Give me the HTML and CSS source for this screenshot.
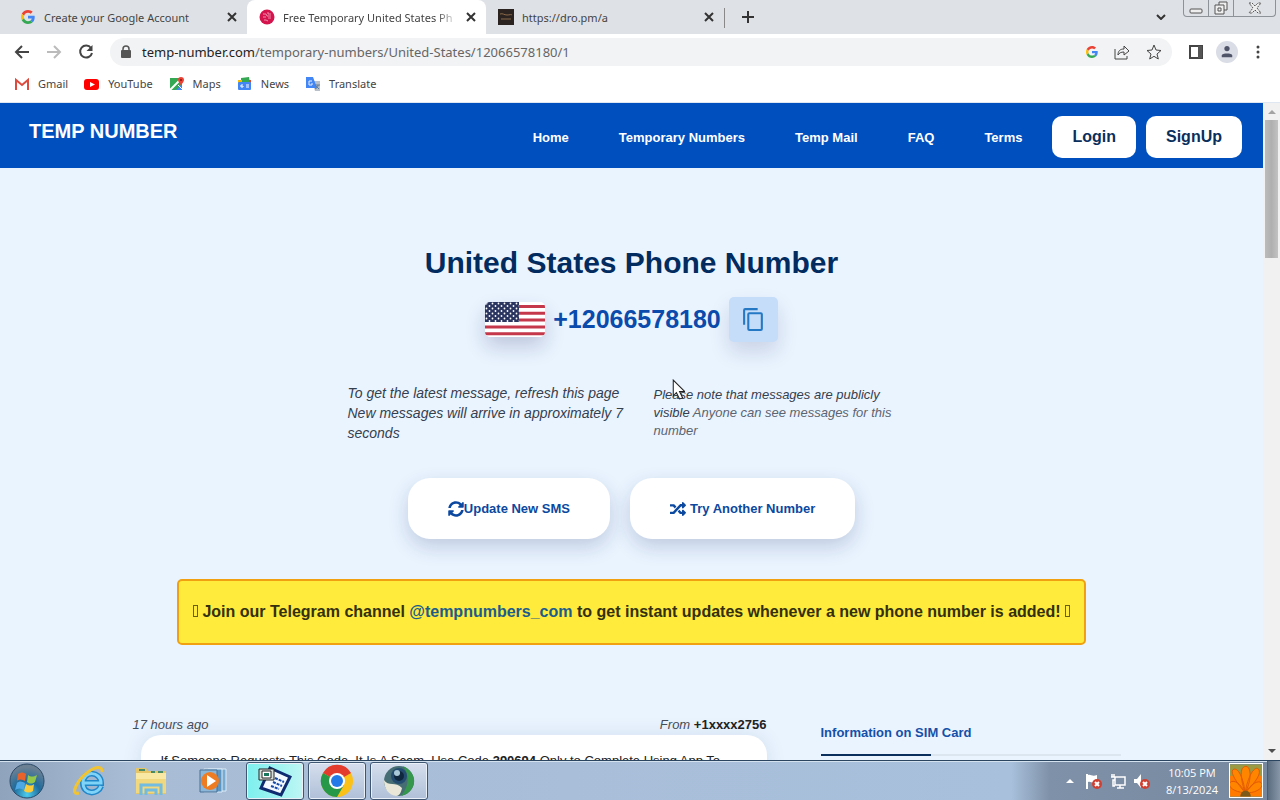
FILE: index.html
```html
<!DOCTYPE html>
<html lang="en">
<head>
  <meta charset="UTF-8" />
  <meta name="viewport" content="width=device-width, initial-scale=1.0"/>
  <title>Free Temporary United States Phone Number</title>
  <link rel="stylesheet" href="styles.css">
</head>
<body>
  <!-- Browser window -->
  <div class="tab-strip">
    <div class="tab">
      <svg class="tab-icon" viewBox="0 0 48 48"><path fill="#ea4335" d="M24 9.500c3.540 0 6.710 1.220 9.210 3.600l6.850-6.850C35.900 2.380 30.470 0 24 0 14.620 0 6.510 5.380 2.560 13.220l7.980 6.190C12.430 13.720 17.740 9.500 24 9.500z"/><path fill="#4285f4" d="M46.980 24.550c0-1.570-.15-3.090-.38-4.550H24v9.020h12.940c-.58 2.960-2.260 5.480-4.780 7.180l7.730 6c4.510-4.180 7.090-10.360 7.090-17.650z"/><path fill="#fbbc05" d="M10.530 28.590A14.500 14.500 0 0 1 9.770 24c0-1.600.27-3.140.76-4.590l-7.980-6.190A23.900 23.900 0 0 0 0 24c0 3.880.92 7.540 2.560 10.780z"/><path fill="#34a853" d="M24 48c6.480 0 11.930-2.130 15.890-5.810l-7.730-6c-2.150 1.450-4.920 2.300-8.160 2.300-6.260 0-11.570-4.220-13.470-9.910l-7.980 6.190C6.510 42.620 14.620 48 24 48z"/></svg>
      <span class="tab-title">Create your Google Account</span>
      <button class="tab-close" aria-label="Close tab"><svg viewBox="0 0 10 10"><path d="M1 1l8 8M9 1L1 9"/></svg></button>
    </div>
    <div class="tab active">
      <svg class="tab-icon" viewBox="0 0 16 16"><circle cx="8" cy="8" r="7.500" fill="#d4144c"/><path d="M4 5h3l1 2h4M4 8h3m2 1h3M5 11h2l2 1M9 3v2h3" fill="none" stroke="#f08fae"/></svg>
      <span class="tab-title">Free Temporary United States Ph</span>
      <button class="tab-close" aria-label="Close tab"><svg viewBox="0 0 10 10"><path d="M1 1l8 8M9 1L1 9"/></svg></button>
    </div>
    <div class="tab">
      <svg class="tab-icon" viewBox="0 0 16 16"><path fill="#2a2320" d="M0 0h16v16H0z"/><path d="M2 5c3-1 4 1 7 1s4-1 5 0M3 10h10" fill="none" stroke="#8a6a4a"/></svg>
      <span class="tab-title">https://dro.pm/a</span>
      <button class="tab-close" aria-label="Close tab"><svg viewBox="0 0 10 10"><path d="M1 1l8 8M9 1L1 9"/></svg></button>
    </div>
    <button class="new-tab" aria-label="New tab"><svg viewBox="0 0 12 12"><path d="M6 0v12M0 6h12"/></svg></button>
    <button class="tab-search" aria-label="Search tabs"><svg viewBox="0 0 10 6"><path d="M1 1l4 4 4-4"/></svg></button>
    <div class="window-buttons">
      <button aria-label="Minimize"><svg viewBox="0 0 14 14"><rect x="1" y="8" width="12" height="4" rx="1"/></svg></button>
      <button aria-label="Restore"><svg viewBox="0 0 14 14"><path d="M5 4V1h8v8h-3M1 4h9v9H1zM4 7h3v3H4z"/></svg></button>
      <button class="wide" aria-label="Close"><svg viewBox="0 0 14 14"><path d="M1 2h3l3 3 3-3h3L9 7l4 5h-3L7 9l-3 3H1l4-5z" stroke-dasharray="2 1"/></svg></button>
    </div>
  </div>

  <div class="toolbar">
    <button aria-label="Back"><svg viewBox="0 0 16 16"><path d="M15 8H2M8 2L2 8l6 6"/></svg></button>
    <button class="disabled" aria-label="Forward"><svg viewBox="0 0 16 16"><path d="M1 8h13M8 2l6 6-6 6"/></svg></button>
    <button aria-label="Reload"><svg viewBox="0 0 16 16"><path d="M13 4a6 6 0 1 0 1 5"/><path d="M14.500 1v6h-6z" fill="#444" stroke="none"/></svg></button>
    <div class="address-bar">
      <svg class="lock" viewBox="0 0 10 14"><rect y="5" width="10" height="8" rx="1" fill="#555"/><path d="M2 6V4a3 3 0 0 1 6 0v2" fill="none" stroke="#555" stroke-width="1.500"/></svg>
      <label for="url">temp-number.com</label>
      <input type="text" id="url" value="/temporary-numbers/United-States/12066578180/1" />
      <button aria-label="Search with Google"><svg class="google" viewBox="0 0 48 48"><path fill="#ea4335" d="M24 9.500c3.540 0 6.710 1.220 9.210 3.600l6.850-6.850C35.900 2.380 30.470 0 24 0 14.620 0 6.510 5.380 2.560 13.220l7.980 6.190C12.430 13.720 17.740 9.500 24 9.500z"/><path fill="#4285f4" d="M46.980 24.550c0-1.570-.15-3.090-.38-4.550H24v9.020h12.940c-.58 2.960-2.260 5.480-4.780 7.180l7.730 6c4.510-4.180 7.090-10.360 7.090-17.650z"/><path fill="#fbbc05" d="M10.530 28.590A14.500 14.500 0 0 1 9.770 24c0-1.600.27-3.140.76-4.590l-7.980-6.190A23.900 23.900 0 0 0 0 24c0 3.880.92 7.540 2.560 10.780z"/><path fill="#34a853" d="M24 48c6.480 0 11.930-2.130 15.890-5.810l-7.730-6c-2.150 1.450-4.920 2.300-8.160 2.300-6.260 0-11.570-4.220-13.470-9.910l-7.980 6.190C6.510 42.620 14.620 48 24 48z"/></svg></button>
      <button aria-label="Share"><svg class="thin" viewBox="0 0 16 16"><path d="M1 5v10h12v-3M4 11c0-4 2-6 6-6V2l5 5-5 4V8c-3 0-5 1-6 3z"/></svg></button>
      <button aria-label="Bookmark this page"><svg class="thin" viewBox="0 0 16 16"><path d="M8 1l2 5 5 .5-4 3.500 1.300 5L8 12.300 3.700 15 5 10 1 6.500 6 6z"/></svg></button>
    </div>
    <button aria-label="Side panel"><svg viewBox="0 0 16 16"><path d="M2 2h12v12H2z"/><path d="M10 2h4v12h-4z" fill="#555" stroke="none"/></svg></button>
    <button class="profile" aria-label="Profile"><svg viewBox="0 0 16 16"><circle cx="8" cy="4" r="3"/><path d="M2 14v-2c0-3 12-3 12 0v2z"/></svg></button>
    <button aria-label="Menu"><svg viewBox="0 0 16 16"><g fill="#444" stroke="none"><circle cx="8" cy="3" r="1.500"/><circle cx="8" cy="8" r="1.500"/><circle cx="8" cy="13" r="1.500"/></g></svg></button>
  </div>

  <div class="bookmarks">
    <a href="#"><svg viewBox="0 0 16 16"><path fill="#4285f4" d="M1 4l2 1v9H1z"/><path fill="#34a853" d="M13 5l2-1v10h-2z"/><path d="M2 14V4l6 5 6-5v10" fill="none" stroke="#dd4b3e" stroke-width="2"/></svg>Gmail</a>
    <a href="#"><svg viewBox="0 0 16 16"><rect y="3" width="15" height="11" rx="3" fill="#f00"/><path fill="#fff" d="M6 6l5 2.500L6 11z"/></svg>YouTube</a>
    <a href="#"><svg viewBox="0 0 16 16"><path fill="#34a853" d="M1 2h12v12H1z"/><path fill="#4285f4" d="M13 14V8l-6 6z"/><path d="M1 14L12 3" stroke="#fff" stroke-width="2"/><path d="M9 9l5 5" stroke="#fff"/><path fill="#ea4335" d="M12 1a3 3 0 0 1 3 3c0 2-2 3-3 6-1-3-3-4-3-6a3 3 0 0 1 3-3z"/><circle cx="12" cy="4" r="1" fill="#811"/></svg>Maps</a>
    <a href="#"><svg viewBox="0 0 16 16"><path fill="#34a853" d="M4 2l8-1 1 6H4z"/><path fill="#fbbc05" d="M1 4h4v4H1z"/><path fill="#ea4335" d="M12 4h2v4h-2z"/><rect x="1" y="6" width="13" height="8" rx="1" fill="#4285f4"/><path d="M6 9H4v2h2v-1M9 9h3M9 11h3" stroke="#fff" fill="none"/></svg>News</a>
    <a href="#"><svg viewBox="0 0 16 16"><path fill="#b9c0ca" d="M7 5h8v10h-5z"/><path fill="#4285f4" d="M1 1h7l4 11H1z"/><path d="M7 5H4v4h3V7" fill="none" stroke="#eef"/><path d="M10 9h5m-2 0c0 2-1 3-3 4m1-3l3 3" fill="none" stroke="#607d9b"/></svg>Translate</a>
  </div>

  <!-- Web page -->
  <div class="viewport">
    <div class="page">
      <header class="site-header">
        <a class="brand" href="#">TEMP NUMBER</a>
        <nav>
          <a href="#">Home</a>
          <a href="#">Temporary Numbers</a>
          <a href="#">Temp Mail</a>
          <a href="#">FAQ</a>
          <a href="#">Terms</a>
        </nav>
        <div class="account">
          <a href="#">Login</a>
          <a href="#">SignUp</a>
        </div>
      </header>

      <main>
        <h1>United States Phone Number</h1>
        <div class="number-row">
          <svg class="flag" viewBox="0 0 60 35">
            <defs>
              <pattern id="stars" width="6" height="5" patternUnits="userSpaceOnUse"><circle cx="1.500" cy="1.500" r="0.900" fill="#fff"/><circle cx="4.500" cy="4" r="0.900" fill="#fff"/></pattern>
            </defs>
            <path fill="#fff" d="M0 0h60v35H0z"/>
            <path d="M0 4.500h60M0 11.300h60M0 18.100h60M0 24.900h60M0 31.700h60" stroke="#c5384b" stroke-width="3"/>
            <path fill="#2a3560" d="M0 0h34v20H0z"/>
            <path fill="url(#stars)" d="M0 0h34v20H0z"/>
          </svg>
          <span class="number">+12066578180</span>
          <button class="copy-btn" aria-label="Copy number"><svg viewBox="0 0 24 24"><path d="M16 1H4a2 2 0 0 0-2 2v14h2V3h12zm3 4H8a2 2 0 0 0-2 2v14a2 2 0 0 0 2 2h11a2 2 0 0 0 2-2V7a2 2 0 0 0-2-2zm0 16H8V7h11z"/></svg></button>
        </div>

        <div class="notes">
          <p class="note-main">To get the latest message, refresh this page<br>New messages will arrive in approximately 7 seconds</p>
          <p class="note-side">Please note that messages are publicly visible <span>Anyone can see messages for this number</span></p>
        </div>

        <div class="actions">
          <button><svg viewBox="0 0 512 512"><path d="M370.700 133.300C339.500 104 298.900 88 255.800 88c-77.500.1-144.300 53.200-162.800 126.900-1.300 5.400-6.100 9.100-11.700 9.100H24.100c-7.500 0-13.200-6.800-11.800-14.200C33.900 94.900 134.800 8 256 8c66.400 0 126.800 26.100 171.300 68.700L463 41c15.100-15.100 41-4.400 41 17v134c0 13.300-10.700 24-24 24H346c-21.400 0-32.100-25.900-17-41zM32 296h134c21.400 0 32.100 25.900 17 41l-41.800 41.800c31.300 29.300 71.800 45.300 114.900 45.300 77.400-.1 144.300-53.100 162.800-126.800 1.300-5.400 6.100-9.200 11.700-9.200h57.300c7.500 0 13.200 6.800 11.800 14.200C478.100 417.100 377.200 504 256 504c-66.400 0-126.800-26.100-171.300-68.700L49 471c-15.100 15.100-41 4.400-41-17V320c0-13.300 10.700-24 24-24z"/></svg>Update New SMS</button>
          <button><svg viewBox="0 0 512 512"><path d="M505 359c9 9 9 25 0 34l-80 80c-15 15-41 4-41-17v-40h-59c-3 0-6-1-8-4l-71-75 54-57 56 60h28v-40c0-21 26-32 41-17zM12 176h84l56 60 53-57-70-75c-3-3-6-4-9-4H12c-7 0-12 5-12 12v52c0 7 5 12 12 12zm372 0v40c0 21 26 32 41 17l80-80c9-9 9-25 0-34l-80-80c-15-15-41-4-41 17v40h-59c-3 0-6 1-8 4L96 340H12c-7 0-12 5-12 12v52c0 7 5 12 12 12h114c3 0 6-1 9-4l221-236z"/></svg> Try Another Number</button>
        </div>

        <div class="telegram">
          <i class="tofu"></i> Join our Telegram channel <a href="#">@tempnumbers_com</a> to get instant updates whenever a new phone number is added! <i class="tofu"></i>
        </div>

        <div class="columns">
          <section class="messages">
            <div class="meta"><em>17 hours ago</em><span><em>From</em> <b>+1xxxx2756</b></span></div>
            <p class="message">If Someone Requests This Code, It Is A Scam. Use Code <b>390694</b> Only to Complete Using App To Sign</p>
          </section>
          <aside class="sim-info">
            <h2>Information on SIM Card</h2>
          </aside>
        </div>
      </main>
    </div>

    <div class="scrollbar">
      <svg viewBox="0 0 8 4"><path fill="#a3a3a3" d="M4 0l4 4H0z"/></svg>
      <div class="thumb"></div>
      <svg viewBox="0 0 8 4"><path fill="#505050" d="M0 0h8L4 4z"/></svg>
    </div>
  </div>

  <!-- Taskbar -->
  <footer class="taskbar">
    <button class="start" aria-label="Start">
      <svg viewBox="0 0 36 36">
        <defs><radialGradient id="orb" cx=".5" cy=".9" r=".8"><stop offset="0" stop-color="#4ccdee"/><stop offset=".5" stop-color="#1f6b9c"/><stop offset="1" stop-color="#6b8093"/></radialGradient></defs>
        <circle cx="18" cy="18" r="17" fill="url(#orb)" stroke="#2b4a68"/>
        <path fill="#e8622c" d="M9 11c3-2 5-2 8 0l-1 7c-3-2-6-2-8 0z"/><path fill="#94c84a" d="M19 12c3 2 5 2 9 0l-2 7c-3 2-5 2-8 0z"/><path fill="#4fa8e6" d="M8 20c2-2 5-2 8 0l-1 7c-3-2-6-2-9 0z"/><path fill="#fccb3c" d="M17 21c3 2 6 2 8 0l-1 7c-3 2-6 2-9 0z"/>
      </svg>
    </button>
    <button class="task" aria-label="Internet Explorer">
      <svg viewBox="0 0 34 34"><path d="M29 22c-3 9-18 9-18-3 0-13 18-12 18 0H12" fill="none" stroke="#2287c9" stroke-width="6"/><path d="M29 22c-3 9-18 9-18-3 0-13 18-12 18 0H12" fill="none" stroke="#7fd3f7" stroke-width="3"/><path d="M7 29C-3 32 6 15 16 8c8-6 15-6 14 0" fill="none" stroke="#f2c431" stroke-width="3"/></svg>
    </button>
    <button class="task" aria-label="Explorer">
      <svg viewBox="0 0 34 34"><path fill="#e5c566" d="M2 4h10l2 3h18v23H2z"/><path fill="#f8e8a4" d="M2 9h30v20H2z"/><path d="M5 6h6M17 8h4M24 8h5" stroke="#468b65" stroke-width="2"/><path fill="#f1d77d" d="M2 15h30v14H2z"/><path d="M7 31V21h20v10M12 31v-5h10v5" fill="none" stroke="#71bce0" stroke-width="3"/></svg>
    </button>
    <button class="task" aria-label="Media Player">
      <svg viewBox="0 0 34 34"><path fill="#79abd0" stroke="#dcebf7" d="M12 5h18v22H12z"/><path fill="#5d96c3" stroke="#dcebf7" d="M8 5h18v23H8z"/><path fill="#8db7d9" stroke="#466f94" d="M4 6h17v22H4z"/><circle cx="14" cy="17" r="9" fill="#ed7c23"/><path fill="#fff" d="M11 11l9 6-9 6z"/></svg>
    </button>
    <button class="task open current" aria-label="Remote tool">
      <svg viewBox="0 0 34 34"><path fill="#f4faff" stroke="#102c70" stroke-width="3" d="M12 4l20 9-9 18-20-7z"/><path d="M17 14l9 4M15 18l9 4M13 22l8 3" stroke="#1649a8" stroke-width="2" stroke-dasharray="3 1"/><path fill="#d6ddd9" stroke="#222" d="M1 5h15v11H1z"/><path fill="#fff" stroke="#222" d="M4 7h9v7H4z"/><path fill="#18765d" d="M6 9h5v3H6z"/></svg>
    </button>
    <button class="task open" aria-label="Google Chrome">
      <svg viewBox="0 0 34 34"><circle cx="17" cy="17" r="16" fill="#fbc116"/><path fill="#e33b2e" d="M17 17L3 9a16 16 0 0 1 28 0z"/><path fill="#279847" d="M17 17L3 9a16 16 0 0 0 14 24l7-12z"/><circle cx="17" cy="17" r="8" fill="#fff"/><circle cx="17" cy="17" r="6" fill="#2379e8"/></svg>
    </button>
    <button class="task open" aria-label="Webcam">
      <svg viewBox="0 0 34 34"><circle cx="17" cy="17" r="15" fill="#466d73"/><path fill="#34974b" d="M21 2c18 9 12 27-2 30 8-9 9-20 2-30z"/><path fill="#e9e8d8" d="M2 16c4 7 12 1 18 8-1 5-3 8-6 8C6 31 2 24 2 16z"/><circle cx="17" cy="12" r="8" fill="#234c70"/><circle cx="17" cy="12" r="5" fill="#10283d"/><circle cx="15" cy="9" r="3" fill="#a9c9d9"/></svg>
    </button>
    <div class="tray">
      <svg viewBox="0 0 16 16"><path fill="#fff" d="M8 6l4 4H4z"/></svg>
      <svg viewBox="0 0 16 16"><path d="M1 1v15" stroke="#fff" stroke-width="2"/><path fill="#fff" d="M2 2c3-1 4 2 9 0v7c-5 2-6-1-9 0z"/><circle cx="11" cy="11" r="5" fill="#cf4032"/><path d="M9 9l4 4m0-4l-4 4" stroke="#fff" stroke-width="2"/></svg>
      <svg viewBox="0 0 16 16"><path d="M5 4h10v8H5zM7 15h7M10 12v3M2 1v3M4 1v3M1 4h4v3H3v6h2" fill="none" stroke="#fff" stroke-width="1.500"/></svg>
      <svg viewBox="0 0 16 16"><path fill="#fff" d="M0 6h3l4-5v14l-4-5H0z"/><circle cx="11" cy="11" r="5" fill="#cf4032"/><path d="M9 9l4 4m0-4l-4 4" stroke="#fff" stroke-width="2"/></svg>
    </div>
    <div class="clock">10:05 PM<br>8/13/2024</div>
    <svg class="flower" viewBox="0 0 34 34"><path fill="#9a9a42" d="M0 0h34v34H0z"/><path fill="#ff7a00" d="M0 12h34v22H0z"/><path fill="#ff8500" stroke="#e15800" d="M16 30C0 29-4 20 2 18c6-1 11 6 14 12C6 18-1 7 4 5c6-2 11 14 12 25C10 11 11 2 17 2s6 16-1 28C20 8 28 0 31 6c2 6-8 17-15 24 8-12 17-14 18-9s-9 10-18 9z"/><path fill="#7d5a17" d="M11 34c0-8 11-8 11 0z"/></svg>
    <button class="show-desktop" aria-label="Show desktop"></button>
  </footer>

  <svg class="cursor" viewBox="0 0 12 20"><path fill="#fff" stroke="#222" d="M1 1v15l3-3 3 6 3-1-3-6h5z"/></svg>
</body>
</html>
```
FILE: styles.css
```css
* {
  box-sizing: border-box;
}
body {
  margin: 0;
  height: 100vh;
  display: flex;
  flex-direction: column;
  overflow: hidden;
  font-family: "Liberation Sans", Arial, sans-serif;
  font-size: 13px;
  color: #222;
}
button {
  font: inherit;
  border: none;
  background: none;
  padding: 0;
  cursor: pointer;
}
a {
  color: inherit;
  text-decoration: none;
}
svg {
  display: block;
  flex: none;
}

/* browser window */
.tab-strip, .toolbar, .bookmarks {
  display: flex;
  align-items: center;
  flex: none;
  font-family: "Noto Sans", "Open Sans", sans-serif;
  font-size: 11px;
  color: #444;
}
.tab-strip {
  height: 34px;
  padding-left: 8px;
  background: #dee1e5;
}
.tab {
  display: flex;
  align-items: center;
  gap: 8px;
  width: 239px;
  height: 34px;
  padding: 0 10px 0 12px;
}
.tab.active {
  background: #fff;
  border-radius: 8px 8px 0 0;
}
.tab:nth-child(3) {
  border-right: 1px solid #888;
  border-image: linear-gradient(transparent 25%, #888 25%, #888 80%, transparent 80%) 1;
}
.tab-icon {
  width: 16px;
  height: 16px;
}
.tab:first-child .tab-icon {
  width: 14px;
  height: 14px;
  margin: 0 1px;
}
.tab-title {
  flex: 1;
  min-width: 0;
  overflow: hidden;
  white-space: nowrap;
}
.tab.active .tab-title {
  mask-image: linear-gradient(to right, #000 88%, transparent);
}
.tab-close svg {
  width: 10px;
  height: 10px;
}
.tab-close svg, .new-tab svg, .tab-search svg {
  fill: none;
  stroke: #333;
  stroke-width: 2;
}
.new-tab {
  padding: 8px 17px;
}
.new-tab svg {
  width: 12px;
  height: 12px;
}
.tab-search {
  margin-left: auto;
  padding: 8px 17px;
}
.tab-search svg {
  width: 10px;
  height: 6px;
}
.window-buttons {
  display: flex;
  align-self: flex-start;
  height: 17px;
  margin-right: 4px;
  border: 1px solid #8d9298;
  border-top: none;
  border-radius: 0 0 4px 4px;
}
.window-buttons button {
  width: 25px;
  display: flex;
  align-items: center;
  justify-content: center;
  border-right: 1px solid #8d9298;
}
.window-buttons .wide {
  width: 41px;
  border: none;
}
.window-buttons svg {
  width: 14px;
  height: 14px;
  fill: #eee;
  stroke: #555;
}
.toolbar {
  height: 36px;
  padding: 0 14px;
  gap: 16px;
  background: #fff;
}
.toolbar button svg {
  width: 16px;
  height: 16px;
  fill: none;
  stroke: #444;
  stroke-width: 2;
}
.toolbar .disabled svg {
  stroke: #bbb;
}
.toolbar button .thin {
  stroke-width: 1;
}
.toolbar button .google {
  width: 12px;
  height: 12px;
  stroke: none;
}
.address-bar {
  flex: 1;
  display: flex;
  align-items: center;
  height: 28px;
  padding: 0 10px 0 11px;
  border-radius: 14px;
  background: #f2f3f4;
  font-size: 13px;
}
.lock {
  width: 10px;
  height: 14px;
  margin-right: 11px;
}
.address-bar label {
  color: #222;
}
.address-bar input {
  flex: 1;
  min-width: 0;
  padding: 0;
  border: none;
  background: none;
  font: inherit;
  color: #666;
}
.address-bar button {
  margin-left: 16px;
}
.toolbar .profile {
  padding: 4px;
  margin: 0 -4px;
  border-radius: 50%;
  background: #dadde6;
}
.toolbar .profile svg {
  width: 14px;
  height: 14px;
  fill: #505468;
  stroke: none;
}
.bookmarks {
  height: 33px;
  padding: 0 14px 5px;
  gap: 16px;
  background: #fff;
  border-bottom: 1px solid #dfe8f2;
}
.bookmarks a {
  display: flex;
  align-items: center;
  gap: 8px;
}
.bookmarks svg {
  width: 16px;
  height: 16px;
}

/* web page */
.viewport {
  flex: 1;
  min-height: 0;
  display: flex;
  background: #eaf4ff;
}
.page {
  flex: 1;
  overflow: hidden;
}
.site-header {
  display: flex;
  align-items: center;
  padding: 13px 21px 10px 29px;
  background: #004fbf;
  color: #fff;
  font-weight: bold;
}
.brand {
  align-self: flex-start;
  font-size: 20px;
  line-height: 30px;
}
.site-header nav {
  display: flex;
  gap: 50px;
  margin-left: auto;
}
.account {
  display: flex;
  gap: 10px;
  margin-left: 30px;
}
.account a {
  padding: 0 20px;
  border-radius: 10px;
  background: #fff;
  color: #0a2f5c;
  font-size: 16px;
  line-height: 42px;
}
main {
  display: flex;
  flex-direction: column;
  align-items: center;
  padding-top: 73px;
}
h1 {
  margin: 0 0 12px;
  font-size: 30px;
  line-height: 44px;
  color: #022b60;
}
.number-row {
  display: flex;
  align-items: center;
  gap: 8px;
}
.flag {
  width: 60px;
  height: 35px;
  border-radius: 5px;
  box-shadow: 0 10px 20px rgba(20, 30, 90, 0.2);
}
.number {
  font-size: 25px;
  font-weight: bold;
  color: #0b4bab;
}
.copy-btn {
  padding: 10px 12px;
  border-radius: 5px;
  background: #c5ddf8;
  box-shadow: 0 10px 20px rgba(20, 30, 90, 0.15);
}
.copy-btn svg {
  width: 25px;
  height: 25px;
  fill: #2478c4;
}
.notes {
  display: grid;
  grid-template-columns: 294px 262px;
  align-items: center;
  gap: 12px;
  margin-top: 41px;
  font-style: italic;
  color: #34404e;
}
.notes p {
  margin: 0;
}
.note-main {
  font-size: 14px;
  line-height: 20px;
}
.note-side {
  line-height: 18px;
}
.note-side span {
  color: #5b6470;
}
.actions {
  display: flex;
  gap: 20px;
  margin-top: 35px;
}
.actions button {
  display: flex;
  align-items: center;
  height: 61px;
  padding: 0 40px;
  border-radius: 22px;
  background: #fff;
  box-shadow: 0 8px 20px rgba(20, 40, 100, 0.2);
  color: #0b48a0;
  font-weight: bold;
}
.actions svg {
  width: 16px;
  height: 16px;
  fill: currentColor;
}
.actions button + button {
  gap: 4px;
}
.telegram {
  margin-top: 40px;
  padding: 20px 14px;
  border: 2px solid #f0a010;
  border-radius: 5px;
  background: #ffeb3b;
  font-size: 16px;
  line-height: 22px;
  font-weight: bold;
  color: #33300f;
}
.telegram a {
  color: #1c5c8c;
}
.tofu {
  display: inline-block;
  width: 5px;
  height: 12px;
  border: 1px solid #6b5f14;
}
.columns {
  display: grid;
  grid-template-columns: 1fr 300px;
  gap: 54px;
  width: 100%;
  max-width: 998px;
  margin-top: 70px;
  padding-right: 10px;
}
.meta {
  display: flex;
  justify-content: space-between;
  line-height: 20px;
}
.meta em {
  color: #444c57;
}
.message {
  margin: 0 0 0 8px;
  padding: 16px 20px;
  border-radius: 20px;
  background: #fff;
  box-shadow: 0 0 20px rgba(20, 40, 100, 0.1);
  line-height: 20px;
}
.sim-info h2 {
  margin: 8px 0 0;
  padding-bottom: 11px;
  border-bottom: 2px solid;
  border-image: linear-gradient(to right, #0a2f5c 110px, #dce6ee 110px) 1;
  font-size: 13px;
  line-height: 20px;
  color: #1550a8;
}
.scrollbar {
  width: 17px;
  display: flex;
  flex-direction: column;
  align-items: center;
  padding: 7px 2px;
  background: #f1f1f1;
}
.scrollbar svg {
  width: 8px;
  height: 4px;
}
.thumb {
  width: 13px;
  height: 138px;
  margin: 6px 0 auto;
  background: linear-gradient(to right, #bbb, #b0b0b0 50%, #c2c2c2);
}

/* taskbar */
.taskbar {
  flex: none;
  display: flex;
  align-items: center;
  gap: 4px;
  height: 40px;
  border-top: 1px solid #2b4560;
  box-shadow: inset 0 1px #d4e2f0;
  background: linear-gradient(to right, #8fa3bd, #a9bcd6 10%, #a8c0dc 79%, #7f91a8 82%, #76889e);
}
.start {
  width: 56px;
  padding-left: 9px;
}
.start svg {
  width: 36px;
  height: 36px;
}
.task {
  width: 58px;
  height: 38px;
  display: flex;
  align-items: center;
  justify-content: center;
}
.task svg {
  width: 34px;
  height: 34px;
}
.task.open {
  border: 1px solid #3f5672;
  border-radius: 3px;
  background: linear-gradient(#d5deed, #b0c0d8);
  box-shadow: inset 0 0 0 1px #e9f0f8;
}
.task.current {
  background: linear-gradient(to right, #7df0ee, #bdf6f4);
}
.tray {
  display: flex;
  gap: 8px;
  margin-left: auto;
}
.tray svg {
  width: 16px;
  height: 16px;
}
.clock {
  margin: 0 7px 0 12px;
  font-family: "Open Sans", "Noto Sans", sans-serif;
  font-size: 11px;
  line-height: 17px;
  text-align: center;
  color: #fff;
}
.flower {
  width: 34px;
  height: 35px;
  border: 1px solid #fff;
}
.show-desktop {
  width: 13px;
  height: 39px;
  border-left: 1px solid #4a5c70;
  background: linear-gradient(to right, #5b6d80, #8797a8);
}

/* mouse pointer */
.cursor {
  position: absolute;
  left: 672px;
  top: 379px;
  width: 13px;
  height: 21px;
}
```
